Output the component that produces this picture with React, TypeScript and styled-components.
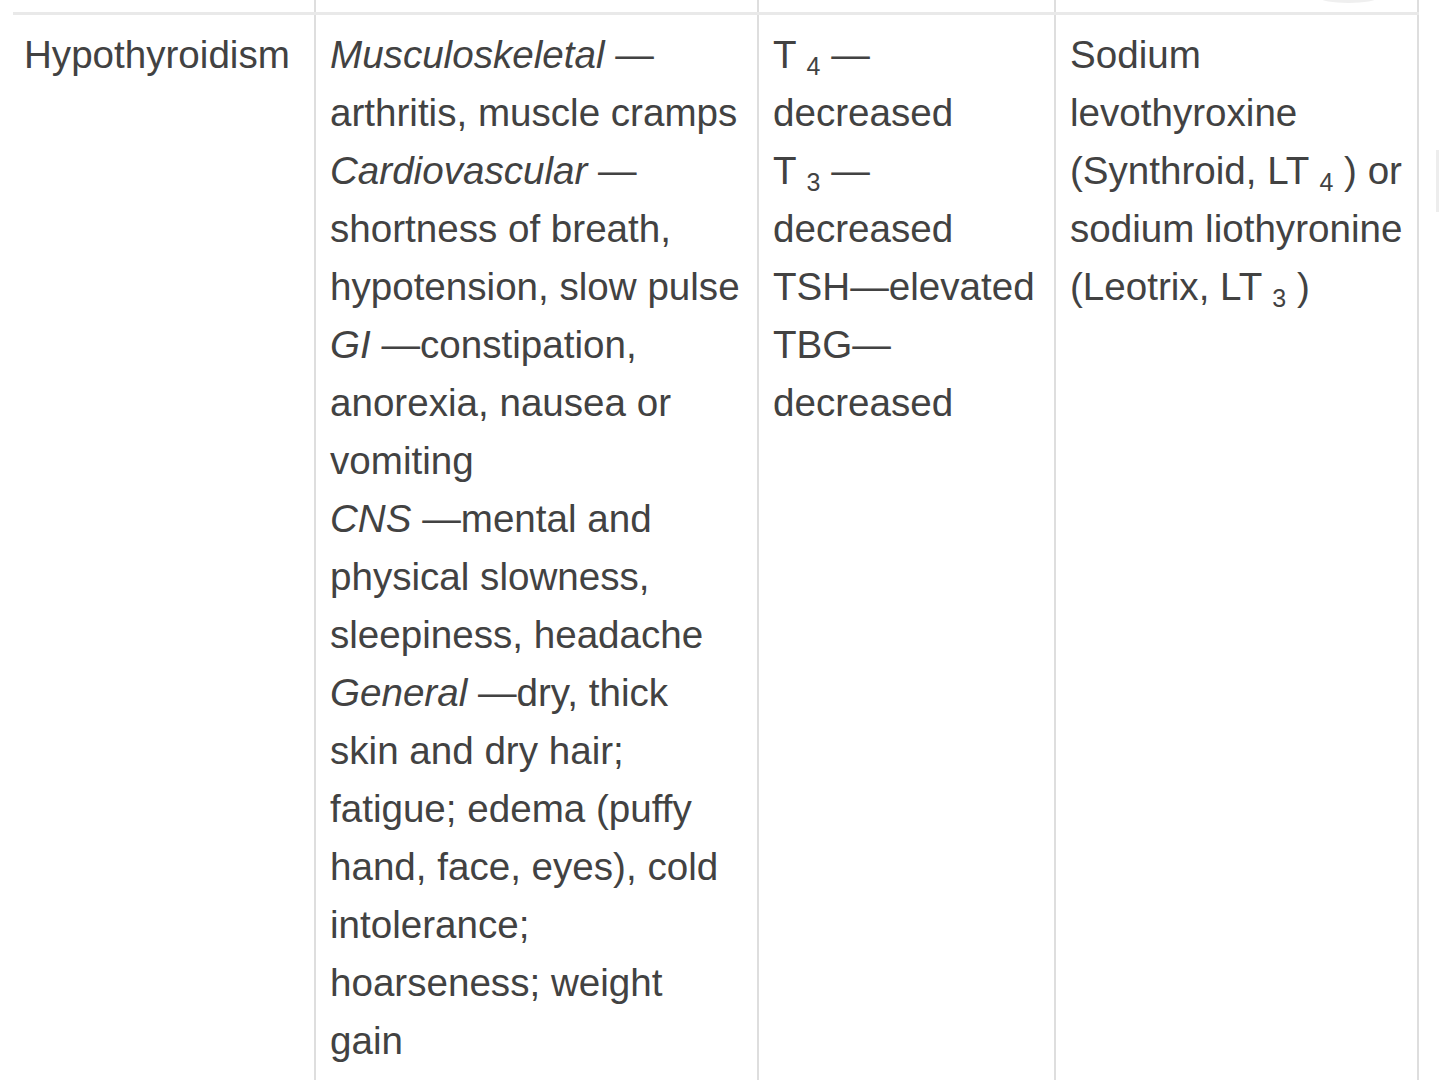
import React from 'react';
import styled, { createGlobalStyle } from 'styled-components';

const GlobalStyle = createGlobalStyle`
  html, body {
    margin: 0;
    padding: 0;
    background: #ffffff;
  }
  body {
    font-family: "Liberation Sans", Arial, Helvetica, sans-serif;
    color: #424242;
  }
`;

const Page = styled.div`
  display: flex;
  align-items: flex-start;
  padding-left: 13px;
  width: 1440px;
  height: 1091px;
  box-sizing: border-box;
  overflow: hidden;
`;

const Table = styled.div`
  display: flex;
  flex-direction: column;
`;

const Row = styled.div<{ $stub?: boolean }>`
  display: grid;
  grid-template-columns: 303px 443px 297px 363px;
  height: ${(p) => (p.$stub ? '12px' : 'auto')};
  overflow: hidden;
  border-top: ${(p) => (p.$stub ? 'none' : '3px solid #e9e9e9')};
`;

const Cell = styled.div<{ $first?: boolean; $stub?: boolean }>`
  box-sizing: border-box;
  border-right: 2px solid #dedede;
  padding: ${(p) => (p.$stub ? '0' : p.$first ? '11px 10px 10px 11px' : '11px 10px 10px 14px')};
  font-size: 38.6px;
  line-height: 58px;
  white-space: nowrap;
`;

const Line = styled.div``;

const Em = styled.i`
  font-style: italic;
`;

const Sub = styled.sub`
  font-size: 25px;
  line-height: 0;
  vertical-align: -7px;
`;

const Pill = styled.div`
  width: 57px;
  height: 10px;
  margin: -7px 0 0 264px;
  border-radius: 50%;
  background: #efefef;
`;

const EdgeBar = styled.div`
  width: 3px;
  height: 62px;
  margin: 150px 0 0 17px;
  background: #ededed;
`;

const symptoms: React.ReactNode[] = [
  <><Em>Musculoskeletal</Em> —</>,
  'arthritis, muscle cramps',
  <><Em>Cardiovascular</Em> —</>,
  'shortness of breath,',
  'hypotension, slow pulse',
  <><Em>GI</Em> —constipation,</>,
  'anorexia, nausea or',
  'vomiting',
  <><Em>CNS</Em> —mental and</>,
  'physical slowness,',
  'sleepiness, headache',
  <><Em>General</Em> —dry, thick</>,
  'skin and dry hair;',
  'fatigue; edema (puffy',
  'hand, face, eyes), cold',
  'intolerance;',
  'hoarseness; weight',
  'gain',
];

const labs: React.ReactNode[] = [
  <>T <Sub>4</Sub> —</>,
  'decreased',
  <>T <Sub>3</Sub> —</>,
  'decreased',
  'TSH—elevated',
  'TBG—',
  'decreased',
];

const treatment: React.ReactNode[] = [
  'Sodium',
  'levothyroxine',
  <>(Synthroid, LT <Sub>4</Sub> ) or</>,
  'sodium liothyronine',
  <>(Leotrix, LT <Sub>3</Sub> )</>,
];

const renderLines = (lines: React.ReactNode[]) =>
  lines.map((l, i) => <Line key={i}>{l}</Line>);

const App: React.FC = () => {
  return (
    <>
      <GlobalStyle />
      <Page>
        <Table>
          <Row $stub>
            <Cell $stub />
            <Cell $stub />
            <Cell $stub />
            <Cell $stub>
              <Pill />
            </Cell>
          </Row>
          <Row>
            <Cell $first>
              <Line>Hypothyroidism</Line>
            </Cell>
            <Cell>{renderLines(symptoms)}</Cell>
            <Cell>{renderLines(labs)}</Cell>
            <Cell>{renderLines(treatment)}</Cell>
          </Row>
        </Table>
        <EdgeBar />
      </Page>
    </>
  );
};

export default App;
